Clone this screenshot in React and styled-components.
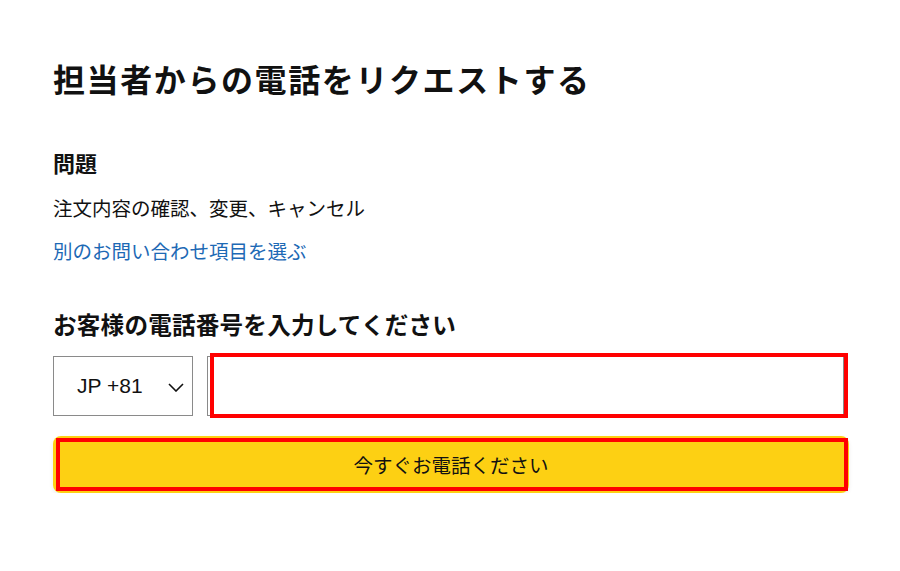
import styled, { createGlobalStyle } from "styled-components"

const GlobalStyle = createGlobalStyle`
	body {
		margin: 0;
		background: #fff;
		color: #111;
		font-family: "Noto Sans CJK JP", "Noto Sans", sans-serif;
	}
`

export default function App() {
	return (
		<Page>
			<GlobalStyle />
			<Title>担当者からの電話をリクエストする</Title>

			<Label>問題</Label>
			<Text>注文内容の確認、変更、キャンセル</Text>
			<Link href="#">別のお問い合わせ項目を選ぶ</Link>

			<Heading>お客様の電話番号を入力してください</Heading>
			<Row>
				<Select>
					<span>JP +81</span>
					<svg width="16" height="9" viewBox="0 0 16 9" fill="none">
						<path d="M1 1l7 7 7-7" stroke="#111" strokeWidth="1.6" />
					</svg>
				</Select>
				<Field>
					<PhoneInput type="tel" />
					<Highlight $inset="-3px -4px -2px 3px" />
				</Field>
			</Row>

			<ButtonWrap>
				<CallButton>今すぐお電話ください</CallButton>
				<Highlight $inset="2px 1px 2px 3px" />
			</ButtonWrap>
		</Page>
	)
}

const Page = styled.div`
	padding: 56px 52px 0 53px;
	width: 796px;
`
const Title = styled.h1`
	margin: 0;
	font-size: 32px;
	line-height: 44px;
	font-weight: 700;
	letter-spacing: 1.6px;
`
const Label = styled.h2`
	margin: 46px 0 0;
	font-size: 22px;
	line-height: 32px;
	font-weight: 700;
`
const Text = styled.p`
	margin: 16px 0 0;
	font-size: 19.5px;
	line-height: 28px;
`
const Link = styled.a`
	display: block;
	margin-top: 15px;
	font-size: 19.5px;
	line-height: 28px;
	color: #1d69b5;
	text-decoration: none;
`
const Heading = styled.h2`
	margin: 43px 0 0;
	font-size: 23.6px;
	line-height: 32px;
	font-weight: 700;
	letter-spacing: 0.2px;
`
const Row = styled.div`
	display: flex;
	gap: 14px;
	margin-top: 16px;
	height: 60px;
`
const Select = styled.div`
	box-sizing: border-box;
	width: 140px;
	display: flex;
	align-items: center;
	justify-content: space-between;
	padding: 0 8px 0 23px;
	border: 1px solid #8a8a8a;
	font-family: "Liberation Sans", "Noto Sans", sans-serif;
	font-size: 21px;
	svg { margin-top: 2px; }
`
const Field = styled.div`
	position: relative;
	flex: 1;
	margin-right: 5px;
`
const PhoneInput = styled.input`
	box-sizing: border-box;
	width: 100%;
	height: 100%;
	border: 1px solid #8a8a8a;
	font-size: 20px;
	outline: none;
`
const Highlight = styled.div`
	position: absolute;
	inset: ${p => p.$inset};
	border: 4px solid #ff0000;
	pointer-events: none;
`
const ButtonWrap = styled.div`
	position: relative;
	margin-top: 20px;
	height: 57px;
`
const CallButton = styled.button`
	width: 100%;
	height: 100%;
	border: none;
	border-radius: 8px;
	background: #fdd013;
	box-shadow: 0 2px 4px rgba(0, 0, 0, 0.08);
	color: #111;
	font-family: "Noto Sans CJK JP", sans-serif;
	font-size: 19.5px;
	cursor: pointer;
`
